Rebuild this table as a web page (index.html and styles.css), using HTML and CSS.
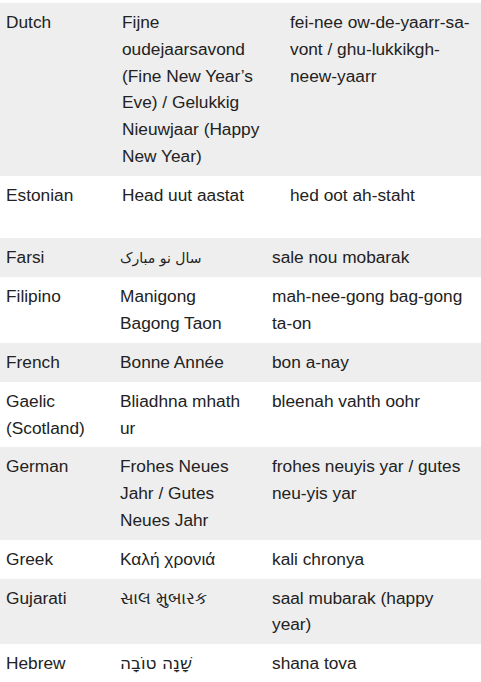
FILE: index.html
```html
<!DOCTYPE html>
<html lang="en">
<head>
<meta charset="utf-8">
<title>New Year greetings</title>
<link rel="stylesheet" href="styles.css">
</head>
<body>
<div class="page">
  <table class="greetings greetings-top">
    <colgroup>
      <col class="c-lang-a">
      <col class="c-phrase-a">
      <col class="c-pron-a">
    </colgroup>
    <tbody>
      <tr class="shade">
        <td>Dutch</td>
        <td>Fijne oudejaarsavond (Fine New Year’s Eve) / Gelukkig Nieuwjaar (Happy New Year)</td>
        <td class="pron pron-wide">fei-nee ow-de-yaarr-sa-vont / ghu-lukkikgh-neew-yaarr</td>
      </tr>
      <tr class="tall">
        <td>Estonian</td>
        <td>Head uut aastat</td>
        <td class="pron pron-wide">hed oot ah-staht</td>
      </tr>
    </tbody>
  </table>
  <table class="greetings greetings-main">
    <colgroup>
      <col class="c-lang-b">
      <col class="c-phrase-b">
      <col class="c-pron-b">
    </colgroup>
    <tbody>
      <tr class="shade">
        <td>Farsi</td>
        <td class="phrase"><span class="arabic" dir="rtl">سال نو مبارک</span></td>
        <td class="pron">sale nou mobarak</td>
      </tr>
      <tr>
        <td>Filipino</td>
        <td class="phrase">Manigong Bagong Taon</td>
        <td class="pron">mah-nee-gong bag-gong ta-on</td>
      </tr>
      <tr class="shade">
        <td>French</td>
        <td class="phrase">Bonne Année</td>
        <td class="pron">bon a-nay</td>
      </tr>
      <tr>
        <td>Gaelic (Scotland)</td>
        <td class="phrase">Bliadhna mhath ur</td>
        <td class="pron">bleenah vahth oohr</td>
      </tr>
      <tr class="shade">
        <td>German</td>
        <td class="phrase">Frohes Neues Jahr / Gutes Neues Jahr</td>
        <td class="pron">frohes neuyis yar / gutes neu-yis yar</td>
      </tr>
      <tr>
        <td>Greek</td>
        <td class="phrase">Καλή χρονιά</td>
        <td class="pron">kali chronya</td>
      </tr>
      <tr class="shade">
        <td>Gujarati</td>
        <td class="phrase">સાલ મુબારક</td>
        <td class="pron">saal mubarak (happy year)</td>
      </tr>
      <tr>
        <td>Hebrew</td>
        <td class="phrase"><span class="hebrew" dir="rtl">שָׁנָה טוֹבָה</span></td>
        <td class="pron">shana tova</td>
      </tr>
    </tbody>
  </table>
</div>
</body>
</html>
```

FILE: styles.css
```css
html, body {
  margin: 0;
  padding: 0;
  background: #ffffff;
}

body {
  font-family: "Liberation Sans", Arial, "DejaVu Sans", sans-serif;
  font-size: 17.3px;
  line-height: 26.8px;
  color: #222222;
}

.page {
  padding-top: 3px;
  width: 481px;
}

.greetings {
  width: 481px;
  border-collapse: collapse;
  border-spacing: 0;
  table-layout: fixed;
}

.greetings td {
  vertical-align: top;
  text-align: left;
  padding: 6px 6px 6px 6px;
}

.shade td {
  background: #eeeeee;
}

.tall td {
  padding-bottom: 29px;
}

.c-lang-a { width: 116px; }
.c-phrase-a { width: 168px; }
.c-pron-a { width: 197px; }

.c-lang-b { width: 114px; }
.c-phrase-b { width: 152px; }
.c-pron-b { width: 215px; }

.greetings td.pron {
  padding-right: 13px;
}

.greetings td.pron-wide {
  padding-right: 3px;
}

.greetings td.phrase {
  padding-right: 22px;
}

.arabic {
  font-family: "DejaVu Sans", sans-serif;
  font-size: 14px;
  unicode-bidi: isolate;
}

.hebrew {
  font-family: "DejaVu Sans", sans-serif;
  font-size: 17px;
  unicode-bidi: isolate;
}
```
